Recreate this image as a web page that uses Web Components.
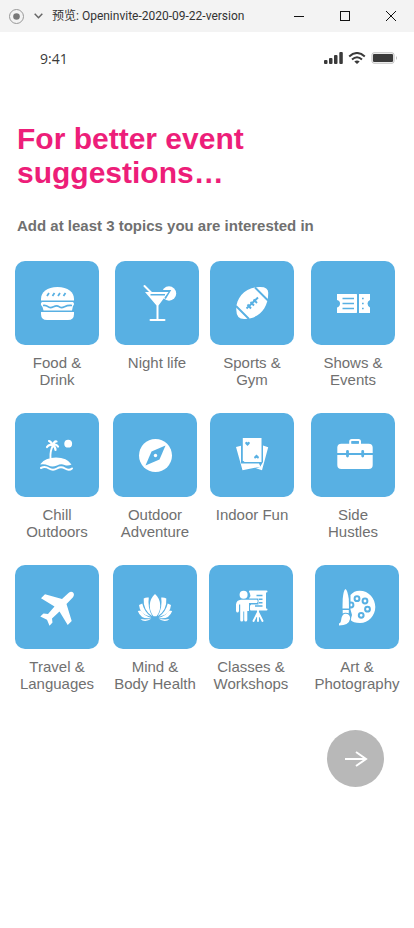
<!DOCTYPE html>
<html lang="en">
<head>
<meta charset="utf-8">
<meta name="viewport" content="width=device-width, initial-scale=1">
<title>Openinvite</title>
<style>
  body { margin: 0; background: #fff; font-family: "Liberation Sans", Arial, sans-serif; }
</style>
</head>
<body>
<invite-app></invite-app>

<script>
// Tile artwork, drawn on an 84-unit square. Class "w" is a white stroke, "b" a tile-coloured one.
const ICONS = {
  burger: `<path d="M26 39.500V38C26 31 32 26 42.500 26S59 31 59 38V39.500Z"/>
    <path class="b" stroke-width="1.800" d="M32 35l2-3M37.500 35l2-3M43 35l2-3M48.500 35l2-3"/>
    <path d="M27 41H58Q60 43 58 45L57 49.500H28.500L27.500 46Q24.500 43 27 41Z"/>
    <path class="b" stroke-width="1.700" d="M28 44.500Q31 44 33 45.700T38.500 45.700T44 45.700T49.500 45.700T57 44.500"/>
    <path d="M26 51H59V53Q59 59 53 59H32Q26 59 26 53Z"/>`,
  martini: `<circle cx="54" cy="32.500" r="7.200"/>
    <path class="b" stroke-width="2" d="M46 30H54.500L50 37.500"/>
    <path class="w" stroke-width="2" d="M29.500 25L36 31.500"/>
    <path d="M30 31H53.500L43.500 44.500V58H41.500V44.500Z"/>
    <path class="b" stroke-width="1.600" d="M35.500 33.700H50"/>
    <path class="w" stroke-width="2" d="M35.500 59H49.500"/>`,
  football: `<path d="M26.300 48C26 38 34 26.500 49 26Q58.500 25.500 58.200 32C58.500 47 49 57.500 35 58Q26 58.500 26.300 48Z"/>
    <path class="b" stroke-width="1.900" d="M45 26.500L58 39.500M26 45L39 58M36.500 47.500L48 36.500M37.500 43.500L41 47.500M40.500 41L44 44.500M43.500 38.500L47 42"/>`,
  ticket: `<path d="M26 33H45.500L46 33.500V51.500L45.500 52H26V46.500Q29 45.500 29 42.500T26 39Z"/>
    <path d="M48 33H59V39Q56.500 40 56.500 42.500T59 46.500V52H48Z"/>
    <path class="b" stroke-width="1.700" d="M31.500 37.500H43M31.500 42.500H43M31.500 47.500H43"/>
    <path class="b" stroke-width="1.700" d="M51 37.500h1.700M51 42.500h1.700M51 47.500h1.700"/>`,
  island: `<circle cx="53.200" cy="30.700" r="3.900"/>
    <path class="w" stroke-width="1.900" d="M35.500 45Q35 38 38 32.500"/>
    <path class="w" stroke-width="2.200" d="M38 32.500Q36 28.500 34 28M38 32.500Q39 28 41.500 28.500M38 32.500Q41 30.500 43 33.500M38 32.500Q34 30.500 32 34M38 32.500Q40.500 34 40.500 37"/>
    <path d="M25.500 51Q30 44.500 41 44.500T56.500 51.500Q53 53.300 49.500 52Q46 50.500 42 52.500Q37 54.500 33.500 52.500Q29 50.500 25.500 51.500Z"/>
    <path class="w" stroke-width="2" d="M26 55Q30 53 34 55.500T42 55.500T50 55.500T57 55.500"/>`,
  compass: `<circle cx="42.500" cy="42.500" r="16.500"/>
    <path class="hole" d="M52.500 32.500L46.500 46.500L32.500 52.500L38.500 38.500Z"/>
    <circle cx="42.500" cy="42.500" r="1.700"/>`,
  cards: `<path d="M26 34L31 32.700V50.500H49L50.500 53.700L32.500 57.200Z"/>
    <path d="M53 32.500L58.200 34.300L52 57.200L46 55.200L50 54L53 49Z"/>
    <path d="M32.800 25H51.500V49H34.500L32.800 47.300Z"/>
    <path class="hole" d="M37.500 33L35.300 30.700Q35 28.800 36.500 28.800L37.500 29.500L38.500 28.800Q40 28.800 39.700 30.700ZM46.500 41.500L44.200 43.700Q43.700 45.700 45.500 45.500L46.500 44.800L47.500 45.500Q49.300 45.700 48.800 43.700Z"/>`,
  briefcase: `<path class="w" stroke-width="2" d="M39.200 31V28.500Q39.200 27 40.700 27H47.500Q49 27 49 28.500V31"/>
    <rect x="26.300" y="30.800" width="35.400" height="25.300" rx="4"/>
    <path class="b" stroke-width="1.800" d="M26 41H62M41 29.700H47"/>
    <path class="b" stroke-width="2.800" stroke-linecap="round" d="M36.500 38.300V43M51.700 38.300V43"/>`,
  plane: `<path d="M57.800 27.300Q60 29.300 58 32.200L51.500 39L56.700 56L52.700 60L44.500 46.500L37 53.500L37.500 57.500L34.500 60.800L32 54.700L25.300 51.500L28.500 48.500L33 49L39.500 41.500L26 33.300L30 29.300L47 34L53.500 28Q56 26 57.800 27.300Z"/>`,
  lotus: `<path d="M42 29Q47.200 33.500 47.200 40.500Q47.200 47 43.500 51.300H40.500Q36.800 47 36.800 40.500Q36.800 33.500 42 29Z"/>
    <path d="M35.800 32.500Q34.300 42.500 39.300 51.300Q29.800 45 30.700 33.500Q33 32 35.800 32.500ZM48.200 32.500Q49.700 42.500 44.700 51.300Q54.200 45 53.300 33.500Q51 32 48.200 32.500Z"/>
    <path d="M29.300 38.500Q31 46.500 38 51.800Q26.500 49.500 26 40ZM54.700 38.500Q53 46.500 46 51.800Q57.500 49.500 58 40Z"/>
    <path d="M24.800 46L28 45.500Q31 51 38.500 53Q28 55 24.800 46ZM59.200 46L56 45.500Q53 51 45.500 53Q56 55 59.200 46Z"/>
    <path d="M27.500 54Q33 55 38.500 53.500Q34 57 29.500 55.500ZM56.500 54Q51 55 45.500 53.500Q50 57 54.500 55.500Z"/>`,
  teacher: `<circle cx="34.600" cy="29.700" r="4"/>
    <path d="M32 34.700H48Q49.500 36 48 38H40V46H38.300V55Q38.200 56.500 36.700 56.500T35.200 55V46.500H34.300V55Q34.200 56.500 32.700 56.500T31.200 55V39.500H30V46Q29.500 47.500 28.500 47.500T27 46V39.500Q27.500 35 32 34.700Z"/>
    <path class="w" stroke-width="2" d="M41 26.500H57.500M42 44.500H57.500M56 27V44M42 41V44"/>
    <path d="M40.500 27H55V44H42V39.500H49.500V33.500H40L41.500 31Z"/>
    <path class="b" stroke-width="1.500" d="M47.500 30.500H53.500M50 34.200H53.500M50 37.800H53.500M46 41H53.500"/>
    <path class="w" stroke-width="1.900" d="M49 45V56M48.500 48L44.500 56M49.500 48L53.500 56"/>`,
  palette: `<path d="M35.500 30Q39 25.700 44.500 25.700C54 25.700 60.300 33.500 60.300 42S53.500 58 45 58Q38 58 35.500 55L37 50L35.500 44.500Z"/>
    <circle class="b" stroke-width="2" cx="42" cy="33.700" r="2.400"/>
    <circle class="b" stroke-width="2" cx="50" cy="36" r="2.400"/>
    <circle class="b" stroke-width="2" cx="52.500" cy="44.200" r="2.400"/>
    <circle class="b" stroke-width="2" cx="46.200" cy="50.300" r="2.400"/>
    <circle class="b" stroke-width="2" cx="36" cy="40" r="2.400"/>
    <path class="edge" d="M30.500 24Q32.500 25 33.800 34L34 43.500H27.500L27.700 34Q28.500 25 30.500 24Z"/>
    <path d="M27.700 45H33.800V48.500H27.700Z"/>
    <path class="edge" d="M30 48.800Q35 48.500 35.200 53.500Q34 60.500 24 60.500V58.500Q26 58 26.300 54Q27 49.500 30 48.800Z"/>`
};

customElements.define("window-bar", class extends HTMLElement {
  constructor() {
    super();
    this.attachShadow({ mode: "open" }).innerHTML = `
      <style>
        :host { display: flex; align-items: center; height: 32px; background: #f3f3f3; color: #333;
                font: 12px/16px Roboto, "Noto Sans CJK SC", sans-serif; }
        svg { display: block; fill: none; }
        .dot { margin-left: 8px; }
        button { border: 0; padding: 0; background: none; color: #111; }
        .menu { padding: 0 9px; color: #666; }
        .title { flex: 1; white-space: nowrap; }
        .ctl { width: 46px; height: 32px; display: grid; place-items: center; }
      </style>
      <svg class="dot" width="17" height="17" stroke="#999"><circle cx="8.500" cy="8.500" r="7"/><circle cx="8.500" cy="8.500" r="3.300" fill="#777" stroke="none"/></svg>
      <button class="menu" aria-label="Menu"><svg width="9" height="6" stroke="currentColor" stroke-width="1.500"><path d="M.7.7L4.500 4.700L8.300.7"/></svg></button>
      <span class="title"><slot></slot></span>
      <button class="ctl" aria-label="Minimize"><svg width="10" height="10" stroke="currentColor"><path d="M0 5.500H10"/></svg></button>
      <button class="ctl" aria-label="Maximize"><svg width="10" height="10" stroke="currentColor"><rect x=".5" y=".5" width="9" height="9"/></svg></button>
      <button class="ctl" aria-label="Close"><svg width="10" height="10" stroke="currentColor"><path d="M0 0L10 10M10 0L0 10"/></svg></button>`;
  }
});

customElements.define("status-bar", class extends HTMLElement {
  constructor() {
    super();
    this.attachShadow({ mode: "open" }).innerHTML = `
      <style>
        :host { display: flex; justify-content: space-between; align-items: center; height: 20px;
                padding: 17px 16px 0 40px; color: #3a3a3a; font: 500 14px/20px "Open Sans", sans-serif; }
        .icons { display: flex; gap: 5px; align-items: center; height: 20px; padding-bottom: 2px; }
        svg { display: block; fill: #3a3a3a; }
      </style>
      <span><slot></slot></span>
      <span class="icons">
        <svg width="19" height="12"><rect y="8" width="3.500" height="4" rx="1"/><rect x="5" y="6" width="3.500" height="6" rx="1"/><rect x="10" y="3" width="3.500" height="9" rx="1"/><rect x="15.300" width="3.500" height="12" rx="1"/></svg>
        <svg width="18" height="12"><g fill="none" stroke="#3a3a3a" stroke-width="2"><path d="M1.200 4.500Q9-2.500 16.800 4.500M4 7.500Q9 3 14 7.500"/></g><path d="M6.300 9.500Q9 7.500 11.700 9.500L9 12Z"/></svg>
        <svg width="27" height="12"><rect x="1" y=".8" width="22" height="10.400" rx="2" fill="none" stroke="#bbb"/><rect x="2" y="2" width="20" height="8" rx="1"/><path d="M25 4Q27 6 25 8Z" fill="#bbb"/></svg>
      </span>`;
  }
});

customElements.define("topic-tile", class extends HTMLElement {
  constructor() {
    super();
    this.attachShadow({ mode: "open" }).innerHTML = `
      <style>
        :host { display: block; width: 84px; }
        button { display: flex; flex-direction: column; align-items: center; gap: 9px; width: 84px; margin: 0;
                 padding: 0; border: 0; background: none; color: #707070; font: 15px/17px "Liberation Sans", Arial, sans-serif;
                 cursor: pointer; }
        svg { display: block; width: 84px; height: 84px; border-radius: 10px; background: #58b0e3; fill: #fff; }
        .w { fill: none; stroke: #fff; stroke-linecap: round; }
        .b { fill: none; stroke: #58b0e3; }
        .hole { fill: #58b0e3; }
        .edge { stroke: #58b0e3; stroke-width: 2; paint-order: stroke; }
        .label { white-space: nowrap; text-align: center; }
      </style>
      <button type="button" aria-pressed="false">
        <svg viewBox="0 0 84 84" aria-hidden="true">${ICONS[this.getAttribute("icon")]}</svg>
        <span class="label"><slot></slot></span>
      </button>`;
    const button = this.shadowRoot.querySelector("button");
    button.addEventListener("click", () =>
      button.setAttribute("aria-pressed", button.getAttribute("aria-pressed") !== "true"));
  }
});

customElements.define("topic-row", class extends HTMLElement {
  constructor() {
    super();
    this.attachShadow({ mode: "open" }).innerHTML = `
      <style>
        :host { display: grid; grid-template-columns: 98fr 97fr 101fr 84fr; padding: 0 19px 0 15px; }
        :host([spread="start"]) { grid-template-columns: 100fr 95fr 101fr 84fr; }
        :host([spread="end"]) { grid-template-columns: 98fr 96fr 106fr 84fr; padding-right: 15px; }
      </style>
      <slot></slot>`;
  }
});

customElements.define("next-button", class extends HTMLElement {
  constructor() {
    super();
    this.attachShadow({ mode: "open" }).innerHTML = `
      <style>
        :host { display: flex; justify-content: flex-end; padding: 38px 30px; }
        button { display: grid; place-items: center; width: 57px; height: 57px; padding: 0; border: 0; border-radius: 50%;
                 background: #b8b8b8; cursor: pointer; }
        svg { display: block; fill: none; stroke: #fff; stroke-width: 2; }
      </style>
      <button type="button" aria-label="Next"><svg width="24" height="16"><path d="M1 8H22M12 1L22 8L12 15"/></svg></button>`;
  }
});

customElements.define("invite-app", class extends HTMLElement {
  constructor() {
    super();
    this.attachShadow({ mode: "open" }).innerHTML = `
      <style>
        :host { display: block; }
        header { padding: 53px 17px 0; }
        h1 { margin: 0; color: #ed1e79; font-size: 30px; line-height: 34px; max-width: 280px; }
        p { margin: 27px 0 0; color: #707070; font-size: 15px; line-height: 17px; font-weight: bold; }
        .topics { display: flex; flex-direction: column; gap: 25px; padding-top: 27px; }
      </style>
      <window-bar>预览: Openinvite-2020-09-22-version</window-bar>
      <status-bar>9:41</status-bar>
      <main>
        <header>
          <h1>For better event suggestions…</h1>
          <p>Add at least 3 topics you are interested in</p>
        </header>
        <div class="topics">
          <topic-row spread="start">
            <topic-tile icon="burger">Food &amp;<br>Drink</topic-tile>
            <topic-tile icon="martini">Night life</topic-tile>
            <topic-tile icon="football">Sports &amp;<br>Gym</topic-tile>
            <topic-tile icon="ticket">Shows &amp;<br>Events</topic-tile>
          </topic-row>
          <topic-row>
            <topic-tile icon="island">Chill<br>Outdoors</topic-tile>
            <topic-tile icon="compass">Outdoor<br>Adventure</topic-tile>
            <topic-tile icon="cards">Indoor Fun</topic-tile>
            <topic-tile icon="briefcase">Side<br>Hustles</topic-tile>
          </topic-row>
          <topic-row spread="end">
            <topic-tile icon="plane">Travel &amp;<br>Languages</topic-tile>
            <topic-tile icon="lotus">Mind &amp;<br>Body Health</topic-tile>
            <topic-tile icon="teacher">Classes &amp;<br>Workshops</topic-tile>
            <topic-tile icon="palette">Art &amp;<br>Photography</topic-tile>
          </topic-row>
        </div>
        <next-button></next-button>
      </main>`;
  }
});
</script>
</body>
</html>
